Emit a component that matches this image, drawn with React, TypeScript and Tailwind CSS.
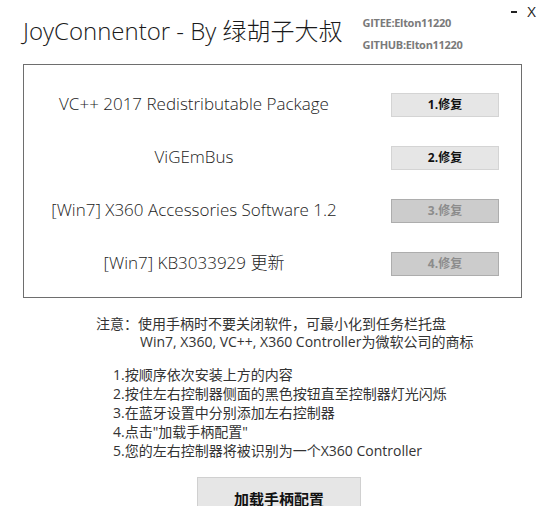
const font = "font-['Open_Sans','Noto_Sans_CJK_SC',sans-serif]";

type Item = { label: string; button: string; enabled: boolean };

const items: Item[] = [
  { label: "VC++ 2017 Redistributable Package", button: "1.修复", enabled: true },
  { label: "ViGEmBus", button: "2.修复", enabled: true },
  { label: "[Win7] X360 Accessories Software 1.2", button: "3.修复", enabled: false },
  { label: "[Win7] KB3033929 更新", button: "4.修复", enabled: false },
];

const steps = [
  "1.按顺序依次安装上方的内容",
  "2.按住左右控制器侧面的黑色按钮直至控制器灯光闪烁",
  "3.在蓝牙设置中分别添加左右控制器",
  '4.点击"加载手柄配置"',
  "5.您的左右控制器将被识别为一个X360 Controller",
];

function RepairButton({ text, enabled }: { text: string; enabled: boolean }) {
  return (
    <button
      className={
        enabled
          ? "h-[24px] w-[108px] border border-[#d4d4d4] bg-[#e6e6e6] text-[12px] font-bold text-[#111]"
          : "h-[24px] w-[108px] border border-[#adadad] bg-[#cccccc] text-[12px] font-bold text-[#8c8c8c]"
      }
    >
      {text}
    </button>
  );
}

export default function App() {
  return (
    <div className={`relative h-[506px] w-[546px] overflow-hidden bg-white ${font}`}>
      {/* window controls */}
      <div className="absolute right-[10px] top-[2px] flex items-center gap-[10px] text-[#222]">
        <span className="mt-[2px] block h-[2px] w-[6px] bg-[#222]" />
        <span className="text-[15px] leading-[18px]">X</span>
      </div>

      <div className="flex items-start pl-[23px] pt-[12px]">
        <div className="mt-[4px] text-[24px] font-light leading-[30px] text-[#1a1a1a]">
          JoyConnentor - By 绿胡子大叔
        </div>
        <div className="ml-[20px] flex flex-col text-[11px] font-bold leading-[22px] tracking-[-0.3px] text-[#7a7a7a]">
          <span>GITEE:Elton11220</span>
          <span>GITHUB:Elton11220</span>
        </div>
      </div>

      <div className="ml-[23px] mt-[8px] flex h-[234px] w-[499px] flex-col border border-[#6e6e6e] pt-[12px]">
        {items.map((it) => (
          <div key={it.button} className="flex h-[53px] items-center">
            <div className="w-[340px] text-center text-[17px] font-light text-[#222]">{it.label}</div>
            <div className="ml-[27px]">
              <RepairButton text={it.button} enabled={it.enabled} />
            </div>
          </div>
        ))}
      </div>

      <div className="mt-[17px] pl-[96px] text-[14px] leading-[18px] text-[#333]">
        <div>注意：使用手柄时不要关闭软件，可最小化到任务栏托盘</div>
        <div className="pl-[44px]">Win7, X360, VC++, X360 Controller为微软公司的商标</div>
      </div>

      <div className="mt-[14px] pl-[113px] text-[14px] leading-[19px] text-[#333]">
        {steps.map((s) => (
          <div key={s}>{s}</div>
        ))}
      </div>

      <div className="mt-[17px] pl-[197px]">
        <button className="h-[44px] w-[164px] border border-[#d0d0d0] bg-[#e6e6e6] text-[15px] font-bold text-[#111]">
          加载手柄配置
        </button>
      </div>
    </div>
  );
}
